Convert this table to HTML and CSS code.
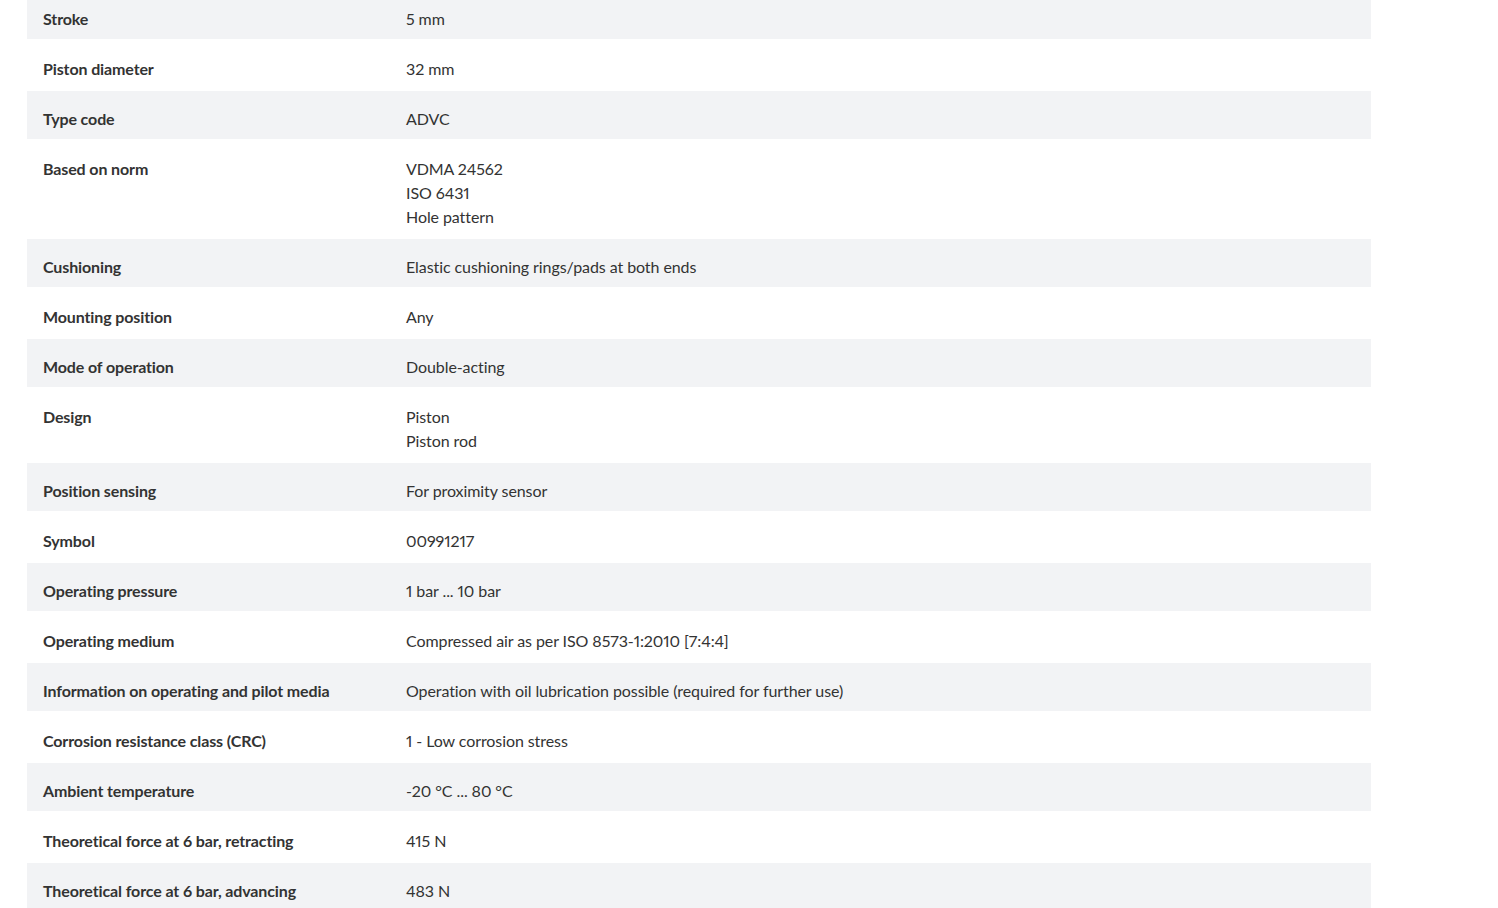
FILE: index.html
```
<!DOCTYPE html>
<html>
<head>
    <title>Technical data</title>
    <link rel="stylesheet" href="styles.css">
</head>
<body>
    <div class="specs">
        <table class="spec-table">
            <tr><td class="label">Stroke</td><td class="value">5 mm</td></tr>
            <tr><td class="label">Piston diameter</td><td class="value">32 mm</td></tr>
            <tr><td class="label">Type code</td><td class="value">ADVC</td></tr>
            <tr><td class="label">Based on norm</td><td class="value">VDMA 24562<br>ISO 6431<br>Hole pattern</td></tr>
            <tr><td class="label">Cushioning</td><td class="value">Elastic cushioning rings/pads at both ends</td></tr>
            <tr><td class="label">Mounting position</td><td class="value">Any</td></tr>
            <tr><td class="label">Mode of operation</td><td class="value">Double-acting</td></tr>
            <tr><td class="label">Design</td><td class="value">Piston<br>Piston rod</td></tr>
            <tr><td class="label">Position sensing</td><td class="value">For proximity sensor</td></tr>
            <tr><td class="label">Symbol</td><td class="value">00991217</td></tr>
            <tr><td class="label">Operating pressure</td><td class="value">1 bar ... 10 bar</td></tr>
            <tr><td class="label">Operating medium</td><td class="value">Compressed air as per ISO 8573-1:2010 [7:4:4]</td></tr>
            <tr><td class="label">Information on operating and pilot media</td><td class="value">Operation with oil lubrication possible (required for further use)</td></tr>
            <tr><td class="label">Corrosion resistance class (CRC)</td><td class="value">1 - Low corrosion stress</td></tr>
            <tr><td class="label">Ambient temperature</td><td class="value">-20 °C ... 80 °C</td></tr>
            <tr><td class="label">Theoretical force at 6 bar, retracting</td><td class="value">415 N</td></tr>
            <tr><td class="label">Theoretical force at 6 bar, advancing</td><td class="value">483 N</td></tr>
        </table>
    </div>
</body>
</html>
```

FILE: styles.css
```
body {
    margin: 0;
    font-family: Lato, "Open Sans", sans-serif;
    color: #333333;
    background-color: #ffffff;
}
.specs {
    width: 1344px;
    margin: -11px 0 0 27px;
}
.spec-table {
    width: 100%;
    border-collapse: separate;
    border-spacing: 0 2px;
    font-size: 16px;
    line-height: 24px;
    font-variant-numeric: proportional-nums;
}
.spec-table td {
    padding: 16px 16px 8px 16px;
    vertical-align: top;
}
.spec-table tr:nth-child(odd) td {
    background-color: #f2f3f5;
}
.label {
    width: 331px;
    font-weight: bold;
    letter-spacing: -0.12px;
}
.value {
    letter-spacing: -0.08px;
}
```
